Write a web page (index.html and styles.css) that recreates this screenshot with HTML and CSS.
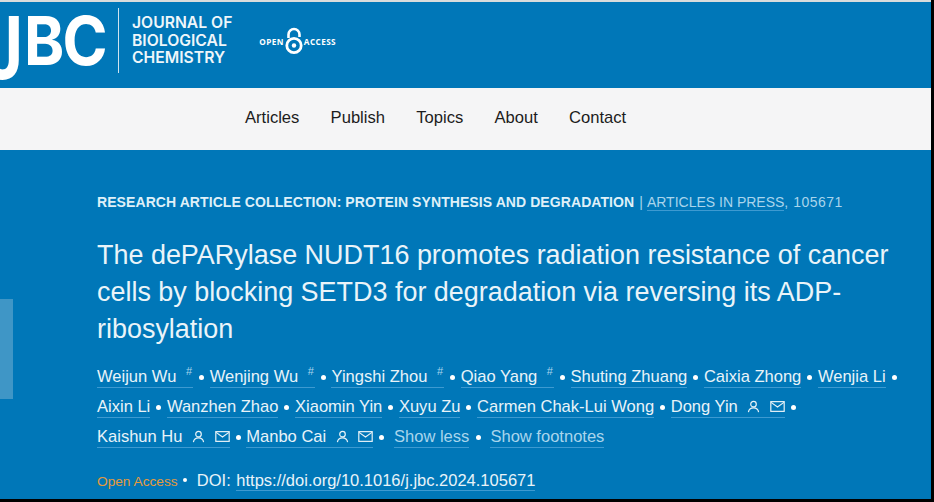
FILE: index.html
```html
<!DOCTYPE html>
<html lang="en">
<head>
    <meta charset="UTF-8">
    <title>The dePARylase NUDT16 promotes radiation resistance - JBC</title>
    <link rel="stylesheet" href="styles.css">
</head>
<body>
    <div class="page">
        <header class="brand">
            <div class="logo" aria-label="JBC"><span class="logo-j">J</span><span class="logo-bc">BC</span></div>
            <div class="brand-rule"></div>
            <div class="journal">JOURNAL OF<br>BIOLOGICAL<br>CHEMISTRY</div>
            <div class="oa-badge">
                <span>OPEN</span>
                <svg class="oa-lock" width="18" height="28" viewBox="0 0 18 28">
                    <path d="M3.500 11V7.500a5.500 5.500 0 0 1 11 0V10" fill="none" stroke="#fff" stroke-width="2.600"/>
                    <circle cx="9" cy="18.500" r="7.200" fill="none" stroke="#fff" stroke-width="2.800"/>
                    <circle cx="9" cy="18.500" r="2.200" fill="#fff"/>
                </svg>
                <span>ACCESS</span>
            </div>
        </header>

        <nav class="nav">
            <a href="#">Articles</a>
            <a href="#">Publish</a>
            <a href="#">Topics</a>
            <a href="#">About</a>
            <a href="#">Contact</a>
        </nav>

        <main class="article">
            <p class="crumb"><strong>RESEARCH ARTICLE COLLECTION: PROTEIN SYNTHESIS AND DEGRADATION</strong> <span class="pipe">|</span> <a href="#">ARTICLES IN PRESS</a>, <span class="article-no">105671</span></p>
            <h1>The dePARylase NUDT16 promotes radiation resistance of cancer cells by blocking SETD3 for degradation via reversing its ADP-ribosylation</h1>
            <ul class="authors">
                <li><a href="#">Weijun Wu <sup>#</sup></a></li>
                <li><a href="#">Wenjing Wu <sup>#</sup></a></li>
                <li><a href="#">Yingshi Zhou <sup>#</sup></a></li>
                <li><a href="#">Qiao Yang <sup>#</sup></a></li>
                <li><a href="#">Shuting Zhuang</a></li>
                <li><a href="#">Caixia Zhong</a></li>
                <li><a href="#">Wenjia Li</a></li>
                <li><a href="#">Aixin Li</a></li>
                <li><a href="#">Wanzhen Zhao</a></li>
                <li><a href="#">Xiaomin Yin</a></li>
                <li><a href="#">Xuyu Zu</a></li>
                <li><a href="#">Carmen Chak-Lui Wong</a></li>
                <li><a href="#">Dong Yin
                    <svg class="ico" width="13" height="13" viewBox="0 0 14 14"><circle cx="7" cy="4.500" r="3"/><path d="M1.500 13c.5-3 2.500-4.500 5.500-4.500s5 1.500 5.500 4.500"/></svg>
                    <svg class="ico mail" width="15" height="11" viewBox="0 0 16 12"><rect x=".7" y=".7" width="14.600" height="10.600"/><path d="M1 1.500l7 5 7-5"/></svg></a></li>
                <li><a href="#">Kaishun Hu
                    <svg class="ico" width="13" height="13" viewBox="0 0 14 14"><circle cx="7" cy="4.500" r="3"/><path d="M1.500 13c.5-3 2.500-4.500 5.500-4.500s5 1.500 5.500 4.500"/></svg>
                    <svg class="ico mail" width="15" height="11" viewBox="0 0 16 12"><rect x=".7" y=".7" width="14.600" height="10.600"/><path d="M1 1.500l7 5 7-5"/></svg></a></li>
                <li class="before-toggle"><a href="#">Manbo Cai
                    <svg class="ico" width="13" height="13" viewBox="0 0 14 14"><circle cx="7" cy="4.500" r="3"/><path d="M1.500 13c.5-3 2.500-4.500 5.500-4.500s5 1.500 5.500 4.500"/></svg>
                    <svg class="ico mail" width="15" height="11" viewBox="0 0 16 12"><rect x=".7" y=".7" width="14.600" height="10.600"/><path d="M1 1.500l7 5 7-5"/></svg></a></li>
                <li class="spaced"><a class="toggle" href="#">Show less</a></li>
                <li class="last"><a class="toggle" href="#">Show footnotes</a></li>
            </ul>
            <p class="meta"><span class="open">Open Access</span> <span class="meta-dot"></span> DOI: <a href="#">https://doi.org/10.1016/j.jbc.2024.105671</a></p>
        </main>

        <div class="side-tab"></div>
    </div>
</body>
</html>
```

FILE: styles.css
```css
* {
    box-sizing: border-box;
}

html, body {
    height: 100%;
}

body {
    margin: 0;
    background: #000;
    font-family: "Liberation Sans", Arial, sans-serif;
    overflow: hidden;
}

.page {
    position: relative;
    width: 931px;
    height: 499px;
    border-top: 2px solid #d9dcdc;
    background: #0077b8;
    overflow: hidden;
    color: #e8f3f8;
}

a {
    color: inherit;
    text-decoration: none;
}

/* top band */
.brand {
    height: 86px;
    display: flex;
    align-items: flex-start;
    color: #fff;
}

.logo {
    width: 110px;
    margin-top: -1px;
    font-family: Inter, sans-serif;
    font-weight: 700;
    font-size: 67px;
    line-height: 80px;
    letter-spacing: -2px;
    white-space: nowrap;
    flex: none;
    display: flex;
    align-items: flex-start;
}

.logo-j {
    display: inline-block;
    transform: scaleY(1.3);
    transform-origin: 50% 16px;
    margin-right: 3px;
    margin-left: -16px;
}

.logo-bc {
    display: inline-block;
    transform: scaleX(.91);
    transform-origin: 0 50%;
}

.brand-rule {
    width: 1px;
    height: 65px;
    margin: 6px 0 0 8px;
    background: #cfe4f0;
    flex: none;
}

.journal {
    margin: 12px 0 0 13px;
    font-family: Inter, sans-serif;
    font-weight: 600;
    font-size: 15.700px;
    line-height: 17.500px;
    color: #eef6fa;
    white-space: nowrap;
    flex: none;
}

.oa-badge {
    margin: 25px 0 0 27px;
    display: flex;
    align-items: center;
    gap: 1px;
    font-family: "Open Sans", sans-serif;
    font-weight: 700;
    font-size: 8.200px;
    letter-spacing: .4px;
}

/* nav */
.nav {
    height: 62px;
    padding: 0 0 3px 245px;
    display: flex;
    align-items: center;
    gap: 31.200px;
    background: #f5f5f6;
    color: #1c1c1c;
    font-size: 16.600px;
}

/* article head */
.article {
    padding: 43px 30px 0 97px;
}

.crumb {
    margin: 0;
    font-size: 14px;
    line-height: 18px;
    color: #a9d5ec;
}

.crumb strong {
    color: #dff0f8;
    letter-spacing: .08px;
}

.crumb .pipe {
    margin: 0 1px;
    color: #a9d5ec;
}

.crumb a {
    border-bottom: 1px solid #3d9ad1;
}

.article-no {
    margin-left: 1px;
    letter-spacing: .5px;
}

h1 {
    margin: 26px 0 0;
    font-weight: 400;
    font-size: 26.950px;
    line-height: 37px;
    color: #eaf4f9;
}

.authors {
    list-style: none;
    margin: 14px 0 0;
    padding: 0;
    font-size: 16.550px;
    line-height: 30px;
}

.authors li {
    display: inline;
}

.authors li::after {
    content: "";
    display: inline-block;
    width: 5px;
    height: 5px;
    margin: 0 1px 1px 6px;
    border-radius: 50%;
    background: #fff;
    vertical-align: middle;
}

.authors li.last::after {
    display: none;
}

.authors li.before-toggle::after {
    margin-right: 5px;
}

.authors li.spaced::after {
    margin: 0 4.500px 1px 7px;
}

.authors a, .meta a {
    padding-bottom: 1px;
    border-bottom: 1px solid #3d9ad1;
}

.authors a {
    white-space: nowrap;
}

.authors sup {
    margin: 0 1px 0 5px;
    font-size: 11px;
    line-height: 0;
    color: #a9d5ec;
}

.ico {
    margin-left: 5px;
    vertical-align: -1px;
    fill: none;
    stroke: #e8f3f8;
    stroke-width: 1.300;
}

.ico.mail {
    vertical-align: 0;
}

.toggle {
    color: #a9d5ec;
}

.meta {
    margin: 13px 0 0;
    font-size: 16.500px;
    line-height: 30px;
}

.open {
    font-size: 13.700px;
    color: #e59a3c;
}

.meta-dot {
    display: inline-block;
    width: 4px;
    height: 4px;
    margin: 0 5px 4px 1px;
    border-radius: 50%;
    background: #fff;
    vertical-align: middle;
}

.meta a {
    margin-left: 1px;
}

/* scroller stub on left edge */
.side-tab {
    position: absolute;
    left: 0;
    top: 297px;
    width: 13px;
    height: 100px;
    background: #3f96c6;
}
```
